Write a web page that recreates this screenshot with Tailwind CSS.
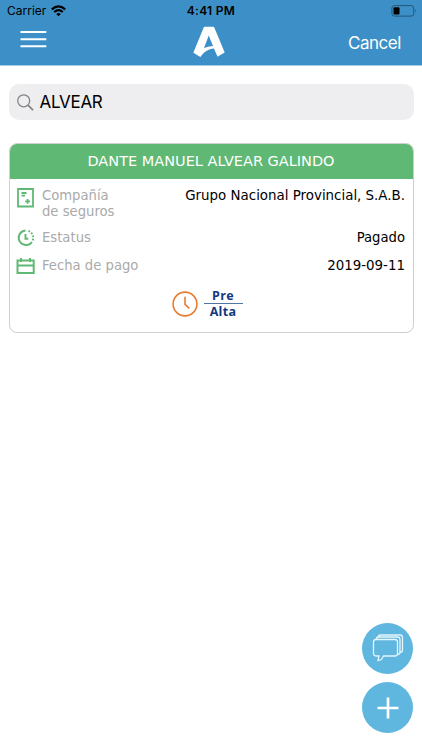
<!DOCTYPE html>
<html lang="es">
<head>
<meta charset="utf-8">
<title>Pagos</title>
<script src="https://cdn.jsdelivr.net/npm/@tailwindcss/browser@4"></script>
</head>
<body class="relative h-[750px] w-[422px] overflow-hidden bg-white font-['Inter',sans-serif]">
<header class="h-[66px] border-b border-[#a5cce5] bg-[#3d90c7]">
  <div class="grid h-[22px] grid-cols-3 items-center text-black">
    <div class="flex items-center gap-[5px] pl-[7px]">
      <span class="text-[12px] leading-[22px]">Carrier</span>
      <svg class="h-[12px] w-[15px]" viewBox="0 0 15 12" fill="none" stroke="black" stroke-width="2.200"><path d="M.8 4.400Q7.500-1.500 14.200 4.400M3.200 7Q7.500 3.200 11.800 7"/><path d="M7.500 11.300L5.200 9Q7.500 7.200 9.800 9Z" fill="black" stroke="none"/></svg>
    </div>
    <span class="text-center text-[12px] font-semibold leading-[22px] tracking-[0.3px]">4:41 PM</span>
    <div class="flex justify-end pr-[5px]">
      <svg class="h-[12px] w-[26px]" viewBox="0 0 26 12"><rect x=".9" y=".6" width="21.800" height="10.500" rx="2.500" fill="none" stroke="#245779"/><rect x="2.500" y="2.200" width="6" height="7.300" rx="1"/><path d="M24 4Q25.800 5.800 24 7.600Z" fill="#245779"/></svg>
    </div>
  </div>
  <div class="grid h-[43px] grid-cols-3">
    <svg class="mt-[8px] ml-[20px] h-[18px] w-[27px]" viewBox="0 0 27 18" stroke="white" stroke-width="2"><path d="M.5 2H26.300M.5 9.200H26.300M.5 16.300H26.300"/></svg>
    <svg class="ml-[52px] mt-[4px] h-[32px] w-[32px]" viewBox="0 0 32 32" fill="white" fill-rule="evenodd"><path d="M11.800.7H20.200Q21 .7 21.300 1.400L31.700 26.500Q27.500 28.800 24.500 30.800L21 22.400C15.500 22.500 11 25.800 7.400 30.900Q4 28.900.3 26.700L10.800 1.300Q11 .7 11.800.7ZM15.700 9.500L11 22Q14.500 20.300 20 19.900Z"/></svg>
    <span class="mt-[9px] pr-[21px] text-right text-[17px] leading-[24px] tracking-[-0.45px] text-white">Cancel</span>
  </div>
</header>
<main class="px-[8.500px] pt-[18px]">
  <div class="flex h-[36px] items-center rounded-[10px] bg-[#eeeef0] pl-[8px]">
    <svg class="h-[17px] w-[17px]" viewBox="0 0 17 17" fill="none" stroke="#858589" stroke-width="1.300"><circle cx="6.700" cy="6.800" r="6"/><path d="M11 11.200L16 16.200" stroke-width="1.700"/></svg>
    <span class="ml-[6px] text-[17px] leading-[24px] tracking-[-0.3px] text-black">ALVEAR</span>
  </div>
  <section class="mt-[23px] h-[190px] overflow-hidden rounded-[8px] border border-[#cfcfcf] font-['DejaVu_Sans',sans-serif] text-[13.400px]">
    <h2 class="h-[35px] bg-[#5fb873] text-center text-[14.500px] leading-[35px] text-white">DANTE MANUEL ALVEAR GALINDO</h2>
    <div class="flex h-[45px] pt-[9px] pl-[7px] pr-[7.500px]">
      <svg class="h-[20px] w-[18px]" viewBox="0 0 18 20" fill="none" stroke="#5fb873" stroke-width="1.800"><path d="M1 1H16V18.500H1ZM4.500 5H9.500M4.500 7.700H8M8.200 13.300H13M10.600 11V15.700"/></svg>
      <p class="ml-[7.500px] text-[13.200px] leading-[16px] text-[#aaa]">Compañía<br>de seguros</p>
      <p class="ml-auto leading-[16px] text-black">Grupo Nacional Provincial, S.A.B.</p>
    </div>
    <div class="flex h-[28px] items-center pl-[7px] pr-[7.500px]">
      <svg class="h-[18px] w-[18px]" viewBox="0 0 18 18" fill="none" stroke="#5fb873" stroke-width="2"><path d="M8.500 1.500A7.300 7.300 0 1 0 15 13"/><path d="M11.500 2A7.300 7.300 0 0 1 15.500 12" stroke-dasharray="1.700 1.500"/><path d="M8.500 5V9.700H11.300" stroke-width="2"/></svg>
      <p class="ml-[7.500px] text-[13.200px] text-[#aaa]">Estatus</p>
      <p class="ml-auto text-[13.200px] text-black">Pagado</p>
    </div>
    <div class="flex h-[28px] items-center pl-[6px] pr-[7.500px]">
      <svg class="h-[18px] w-[19px]" viewBox="0 0 19 18" fill="none" stroke="#5fb873" stroke-width="2"><path d="M1.500 3.500H17.700V16H1.500ZM1.500 8.500H17.700M5 1V5M14 1V5"/></svg>
      <p class="ml-[7.500px] text-[13.200px] text-[#aaa]">Fecha de pago</p>
      <p class="ml-auto text-black">2019-09-11</p>
    </div>
    <div class="flex items-center pt-[8px] pl-[162px]">
      <svg class="h-[26px] w-[26px]" viewBox="0 0 26 26" fill="none" stroke="#e77b31" stroke-width="1.600"><circle cx="13" cy="13" r="11.900"/><path d="M13 5.800V13.300L17.300 17.300"/></svg>
      <div class="ml-[6px] w-[39px] text-center font-['Open_Sans',sans-serif] text-[12.500px] font-bold leading-[15px] tracking-[0.3px] text-[#12397f]"><div class="border-b border-[#4e75a5]">Pre</div><div>Alta</div></div>
    </div>
  </section>
</main>
<nav class="absolute top-[623px] left-[362px] flex flex-col gap-[8px]">
  <button class="grid size-[51px] place-items-center rounded-full bg-[#5fb6df]" aria-label="Mensajes">
    <svg class="h-[30px] w-[32px]" viewBox="0 0 32 30" fill="none" stroke="#e5f6fd" stroke-width="1.300"><path d="M4 5.500H23Q25.500 5.500 25.500 8V19.500Q25.500 22 23 22H11.500L9.500 25.500L6 26.500L7 22H4Q1.500 22 1.500 19.500V8Q1.500 5.500 4 5.500ZM4 5Q4.500 3 6.500 3H25.500Q28 3 28 5.500V18.500Q28 20 26 20.500M6 3Q6.500 1 8.500 1H28Q30.500 1 30.500 3.500V16.500Q30.500 18 28.500 18.500"/></svg>
  </button>
  <button class="grid size-[51px] place-items-center rounded-full bg-[#5fb6df]" aria-label="Agregar">
    <svg class="size-[22px]" viewBox="0 0 22 22" stroke="white" stroke-width="2.700"><path d="M11 .5V21.500M.5 11H21.500"/></svg>
  </button>
</nav>
</body>
</html>
